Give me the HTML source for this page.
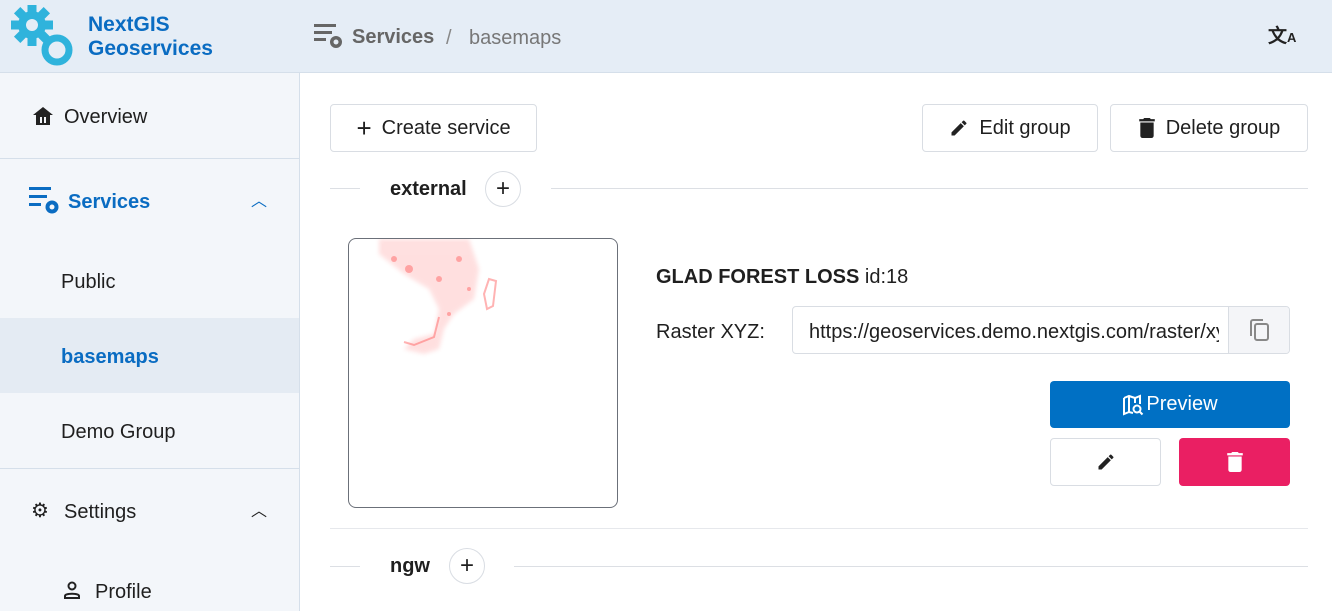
<!DOCTYPE html>
<html><head><meta charset="utf-8"><style>
*{box-sizing:border-box;margin:0;padding:0}
body{width:1332px;height:611px;overflow:hidden;font-family:"Liberation Sans",sans-serif;background:#fff;color:#1f1f1f;position:relative}
.a{position:absolute}
.hdr{left:0;top:0;width:1332px;height:73px;background:#e5edf6;border-bottom:1px solid #d5dfea}
.side{left:0;top:73px;width:300px;height:538px;background:#f3f6fa;border-right:1px solid #d5dfea}
.t{position:absolute;font-size:20px;line-height:24px}
.btn{position:absolute;border:1px solid #d9dde3;border-radius:4px;background:#fff;font-size:20px;display:flex;align-items:center;justify-content:center;gap:10px}
.line{position:absolute;height:1px;background:#dcdfe4}
.circ{position:absolute;width:36px;height:36px;border:1px solid #d9dde3;border-radius:50%;display:flex;align-items:center;justify-content:center;font-size:24px;background:#fff}
</style></head><body>
<div class="a hdr"></div>
<svg class="a" style="left:10px;top:5px" width="66" height="62" viewBox="0 0 66 62">
<g fill="#2fb3dc"><circle cx="22" cy="20" r="14"/>
<g transform="translate(22 20)"><rect x="-4.5" y="-21" width="9" height="42"/><rect x="-4.5" y="-21" width="9" height="42" transform="rotate(45)"/><rect x="-4.5" y="-21" width="9" height="42" transform="rotate(90)"/><rect x="-4.5" y="-21" width="9" height="42" transform="rotate(135)"/></g></g>
<circle cx="22" cy="20" r="6" fill="#e5edf6"/>
<circle cx="47" cy="45" r="12" fill="none" stroke="#2fb3dc" stroke-width="7"/>
</svg>
<div class="t" style="left:88px;top:13px;font-weight:bold;color:#0a6cc2;font-size:21px;line-height:24px">NextGIS<br>Geoservices</div>
<svg class="a" style="left:314px;top:24px" width="30" height="26" viewBox="0 0 30 26"><g fill="#666"><rect x="0" y="0" width="22" height="3"/><rect x="0" y="7" width="18" height="3"/><rect x="0" y="14" width="12" height="3"/><circle cx="22" cy="18" r="6"/></g><circle cx="22" cy="18" r="2.5" fill="#e5edf6"/></svg>
<div class="t" style="left:352px;top:25px;font-weight:bold;color:#666">Services</div>
<div class="t" style="left:446px;top:26px;color:#888">/</div>
<div class="t" style="left:469px;top:26px;color:#777">basemaps</div>
<div class="t" style="left:1268px;top:25px;font-size:19px;font-weight:bold;color:#222">文<span style="font-size:13px">A</span></div>

<div class="a side"></div>
<div class="line" style="left:0;top:158px;width:299px;background:#d5dfea"></div>
<div class="line" style="left:0;top:468px;width:299px;background:#d5dfea"></div>
<div class="a" style="left:0;top:318px;width:299px;height:75px;background:#e4ebf3"></div>
<svg class="a" style="left:33px;top:107px" width="20" height="18" viewBox="0 0 20 18"><path d="M10 0L0 8h3v10h14V8h3z" fill="#222"/><rect x="7" y="10" width="2" height="6" fill="#f3f6fa"/><rect x="11" y="10" width="2" height="6" fill="#f3f6fa"/></svg>
<div class="t" style="left:64px;top:105px">Overview</div>
<svg class="a" style="left:29px;top:187px" width="32" height="28" viewBox="0 0 32 28"><g fill="#0a6cc2"><rect x="0" y="0" width="22" height="3"/><rect x="0" y="8" width="18" height="3"/><rect x="0" y="16" width="12" height="3"/><circle cx="23" cy="20" r="6.5"/></g><circle cx="23" cy="20" r="2.5" fill="#f3f6fa"/></svg>
<div class="t" style="left:68px;top:190px;font-weight:bold;color:#0a6cc2">Services</div>
<div class="t" style="left:251px;top:190px;color:#0a6cc2;font-size:16px">︿</div>
<div class="t" style="left:61px;top:270px">Public</div>
<div class="t" style="left:61px;top:345px;font-weight:bold;color:#0a6cc2">basemaps</div>
<div class="t" style="left:61px;top:420px">Demo Group</div>
<div class="t" style="left:31px;top:499px;font-size:20px">⚙</div>
<div class="t" style="left:64px;top:500px">Settings</div>
<div class="t" style="left:251px;top:500px;font-size:16px">︿</div>
<svg class="a" style="left:63px;top:581px" width="18" height="18" viewBox="0 0 18 18"><circle cx="9" cy="5" r="3.5" fill="none" stroke="#222" stroke-width="2"/><path d="M2 17v-2c0-3 14-3 14 0v2z" fill="none" stroke="#222" stroke-width="2"/></svg>
<div class="t" style="left:95px;top:580px">Profile</div>

<div class="btn" style="left:330px;top:104px;width:207px;height:48px"><span style="font-size:26px">+</span>Create service</div>
<div class="btn" style="left:922px;top:104px;width:176px;height:48px"><svg width="20" height="20" viewBox="0 0 24 24"><path d="M3 17.25V21h3.75L17.81 9.94l-3.75-3.75zM20.71 7.04a1 1 0 000-1.41l-2.34-2.34a1 1 0 00-1.41 0l-1.83 1.83 3.75 3.75z" fill="#222"/></svg>Edit group</div>
<div class="btn" style="left:1110px;top:104px;width:198px;height:48px"><svg width="18" height="20" viewBox="0 0 14 18"><path d="M1 16a2 2 0 002 2h8a2 2 0 002-2V4H1zM14 1h-3.5l-1-1h-5l-1 1H0v2h14z" fill="#222"/></svg>Delete group</div>

<div class="line" style="left:330px;top:188px;width:30px"></div>
<div class="t" style="left:390px;top:177px;font-weight:bold">external</div>
<div class="circ" style="left:485px;top:171px">+</div>
<div class="line" style="left:551px;top:188px;width:757px"></div>

<div class="a" style="left:348px;top:238px;width:270px;height:270px;border:1px solid #6b7079;border-radius:8px;overflow:hidden">
<svg width="270" height="270"><defs><filter id="b"><feGaussianBlur stdDeviation="2"/></filter></defs><g fill="#f55" opacity=".18" filter="url(#b)"><path d="M30 0h90l10 30-5 30-20 15-10 15-5 20-15 5-20-5 10-10 20-5 5-25-10-20-25-15-25-20z"/></g><g fill="none" stroke="#f44" stroke-width="2" opacity=".4"><path d="M140 40l-5 15 3 15 6-3 3-25z"/><path d="M90 78l-5 20-20 8-10-3"/></g><g fill="#f33" opacity=".35"><circle cx="60" cy="30" r="4"/><circle cx="90" cy="40" r="3"/><circle cx="120" cy="50" r="2"/><circle cx="100" cy="75" r="2"/><circle cx="45" cy="20" r="3"/><circle cx="110" cy="20" r="3"/></g></svg></div>

<div class="t" style="left:656px;top:265px"><b>GLAD FOREST LOSS</b> id:18</div>
<div class="t" style="left:656px;top:320px">Raster XYZ:</div>
<div class="a" style="left:792px;top:306px;width:498px;height:48px;border:1px solid #d9dde3;border-radius:4px;overflow:hidden;background:#fff">
<div class="t" style="left:16px;top:13px;white-space:nowrap;width:410px;overflow:hidden">https://geoservices.demo.nextgis.com/raster/xyz</div>
<div class="a" style="left:435px;top:0;width:63px;height:48px;background:#f4f5f8;border-left:1px solid #d9dde3"></div>
<svg class="a" style="left:456px;top:12px" width="22" height="24" viewBox="0 0 22 24"><rect x="6" y="5" width="13" height="16" rx="2" fill="none" stroke="#888" stroke-width="2"/><path d="M2 17V3a2 2 0 012-2h10" fill="none" stroke="#888" stroke-width="2"/></svg></div>

<div class="a" style="left:1050px;top:381px;width:240px;height:47px;background:#0070c4;border-radius:4px;color:#fff;font-size:20px;display:flex;align-items:center;justify-content:center;gap:2px"><svg width="22" height="22" viewBox="0 0 22 22" fill="none" stroke="#fff" stroke-width="2"><path d="M2 4l5-2 6 2 5-2v8M2 4v16l5-2 4 1M7 2v16M13 4v5"/><circle cx="15" cy="15" r="3.5"/><path d="M17.5 17.5l3 3"/></svg>Preview</div>
<div class="btn" style="left:1050px;top:438px;width:111px;height:48px"><svg width="20" height="20" viewBox="0 0 24 24"><path d="M3 17.25V21h3.75L17.81 9.94l-3.75-3.75zM20.71 7.04a1 1 0 000-1.41l-2.34-2.34a1 1 0 00-1.41 0l-1.83 1.83 3.75 3.75z" fill="#222"/></svg></div>
<div class="a" style="left:1179px;top:438px;width:111px;height:48px;background:#ea1f63;border-radius:4px;display:flex;align-items:center;justify-content:center"><svg width="16" height="20" viewBox="0 0 14 18"><path d="M1 16a2 2 0 002 2h8a2 2 0 002-2V4H1zM14 1h-3.5l-1-1h-5l-1 1H0v2h14z" fill="#fff"/></svg></div>

<div class="line" style="left:330px;top:528px;width:978px;background:#e6e8ec"></div>
<div class="line" style="left:330px;top:566px;width:30px"></div>
<div class="t" style="left:390px;top:554px;font-weight:bold">ngw</div>
<div class="circ" style="left:449px;top:548px">+</div>
<div class="line" style="left:514px;top:566px;width:794px"></div>
</body></html>
